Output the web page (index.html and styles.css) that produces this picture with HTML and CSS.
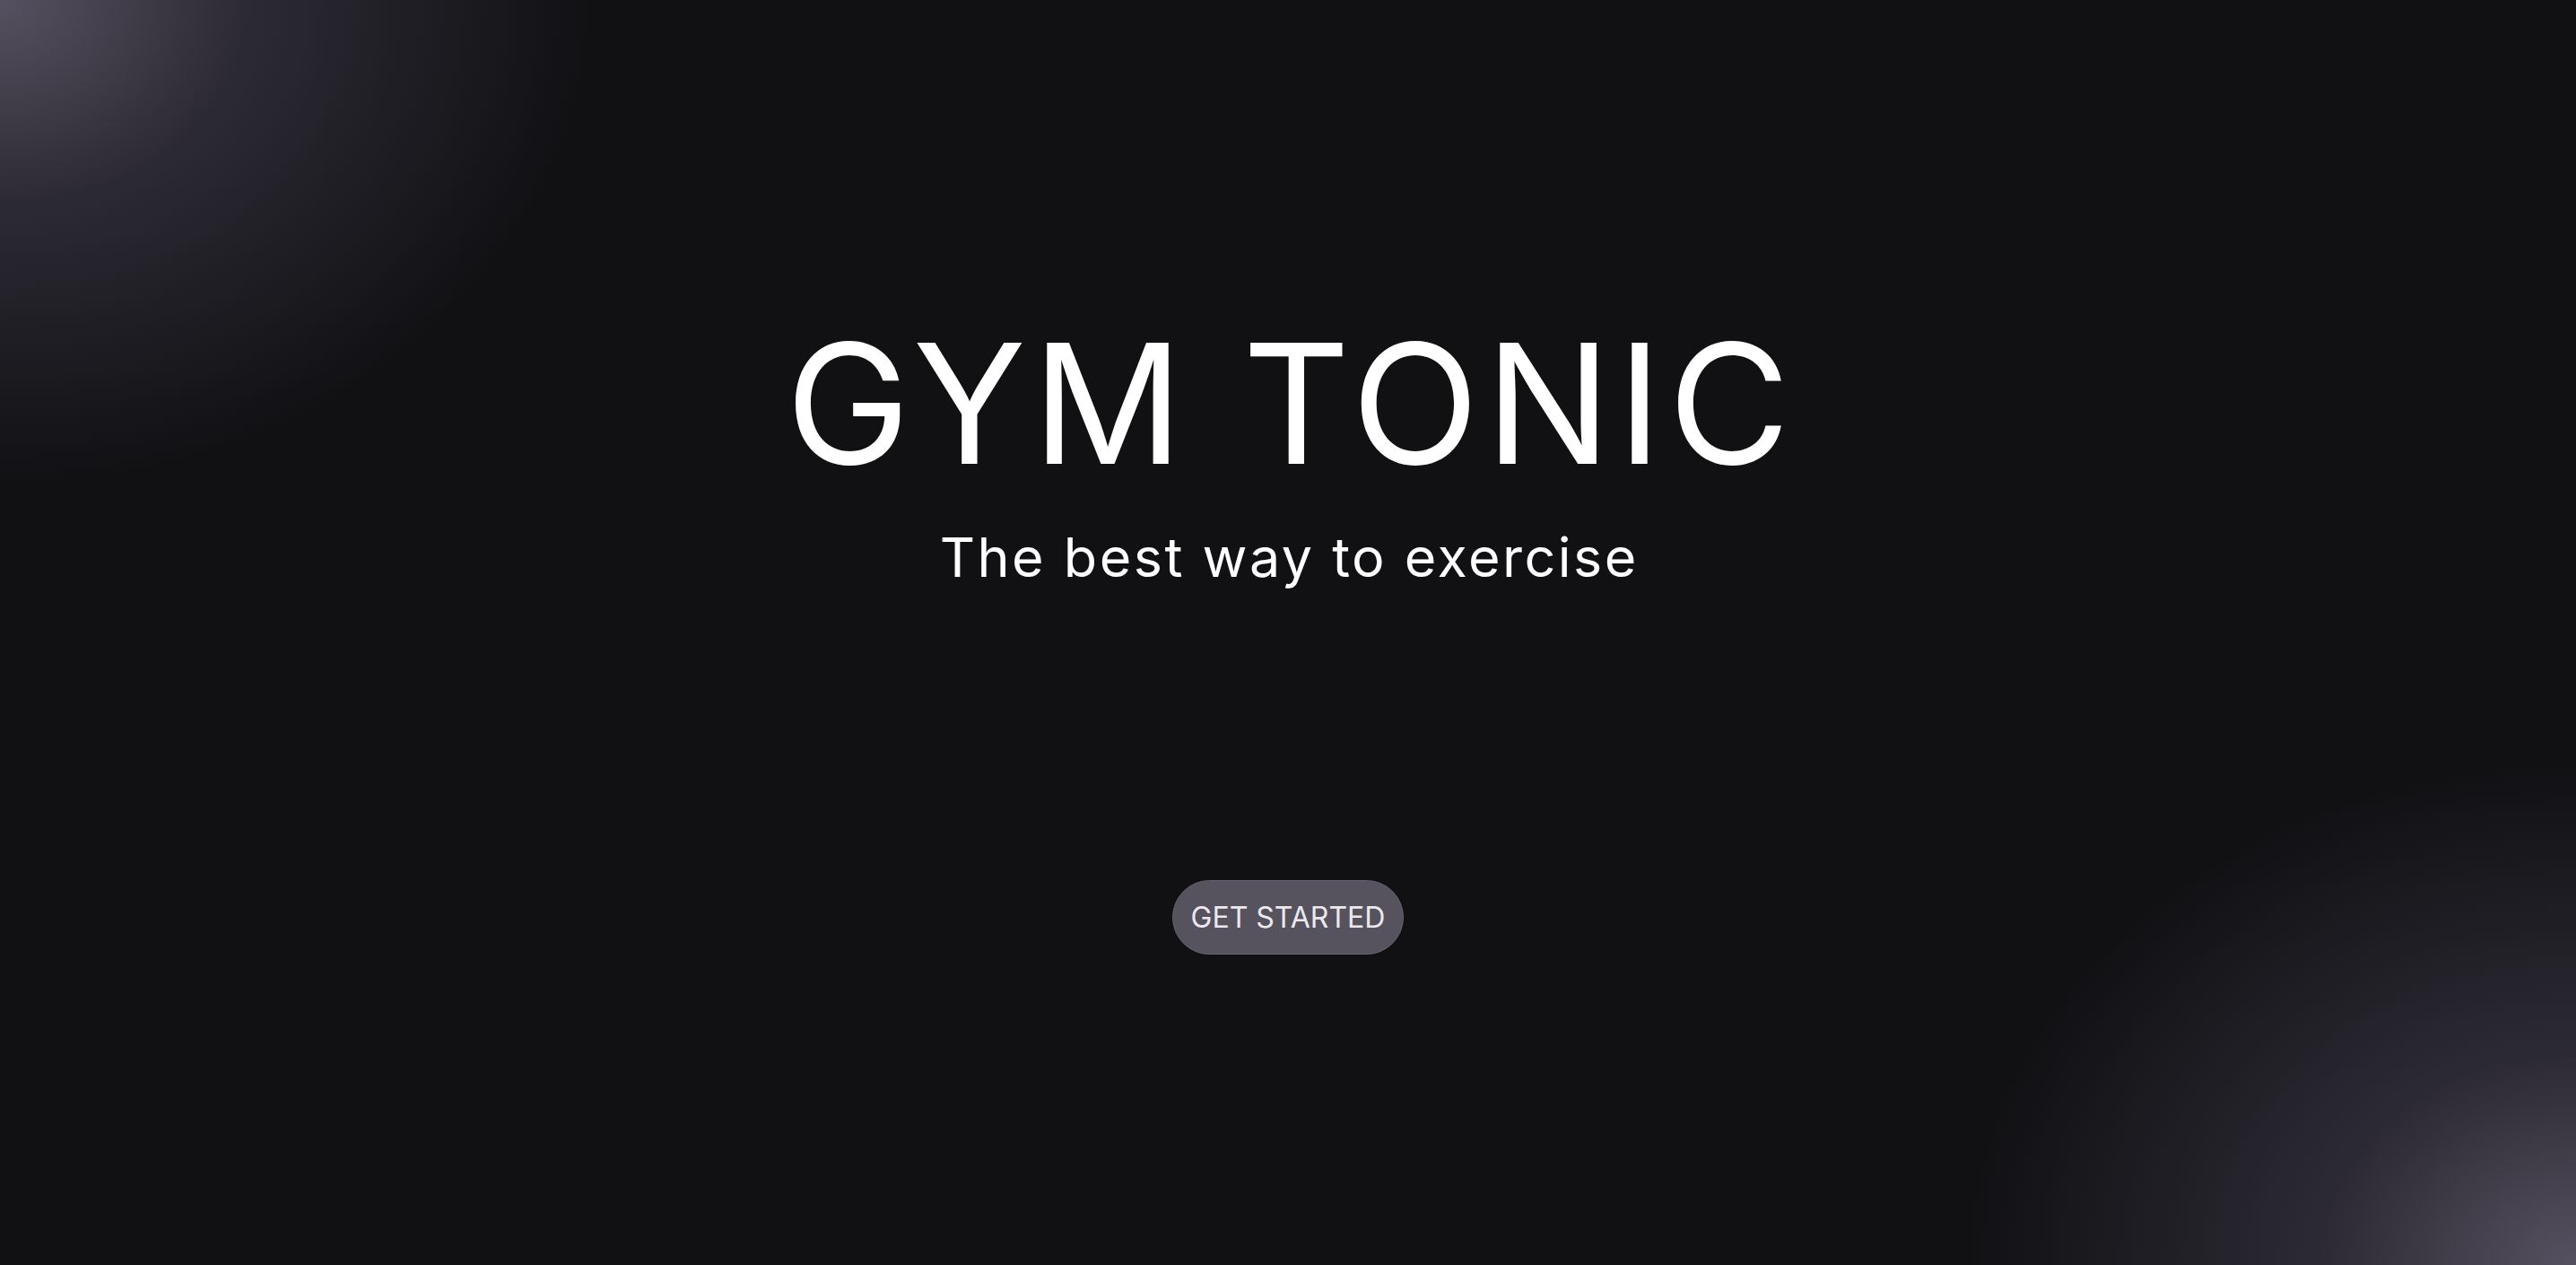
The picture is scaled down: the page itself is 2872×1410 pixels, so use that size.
FILE: index.html
```html
<!DOCTYPE html>
<html lang="en">
<head>
<meta charset="utf-8">
<title>Gym Tonic</title>
<link rel="stylesheet" href="styles.css">
</head>
<body>
<main class="hero">
  <h1 class="hero-title">GYM TONIC</h1>
  <p class="hero-tagline">The best way to exercise</p>
  <a class="hero-cta" href="#">GET STARTED</a>
</main>
</body>
</html>
```

FILE: styles.css
```css
html, body {
  margin: 0;
  padding: 0;
  height: 100%;
}

body {
  background-color: #111114;
  background-image:
    radial-gradient(ellipse 660px 540px at 0 0, rgba(86, 81, 96, 1) 0%, rgba(62, 58, 72, 0.6) 42%, rgba(17, 17, 20, 0) 100%),
    radial-gradient(ellipse 680px 560px at 100% 100%, rgba(86, 81, 96, 1) 0%, rgba(62, 58, 72, 0.6) 42%, rgba(17, 17, 20, 0) 100%);
  background-repeat: no-repeat;
  font-family: Inter, "Liberation Sans", sans-serif;
  color: #ffffff;
  overflow: hidden;
}

.hero {
  height: 100%;
  display: flex;
  flex-direction: column;
  align-items: center;
  padding-top: 357px;
  box-sizing: border-box;
}

.hero-title {
  margin: 0;
  padding-left: 7px;
  font-size: 186px;
  font-weight: 400;
  line-height: 1;
  letter-spacing: 7px;
}

.hero-tagline {
  margin: 48px 0 0;
  padding-left: 2.5px;
  font-size: 61px;
  font-weight: 400;
  line-height: 1;
  letter-spacing: 2.5px;
}

.hero-cta {
  margin-top: 329px;
  display: flex;
  align-items: center;
  justify-content: center;
  width: 258px;
  height: 83px;
  box-sizing: border-box;
  border-radius: 42px;
  background: #56525e;
  border: 1px solid #67636f;
  color: #ebe9ee;
  font-size: 32px;
  text-decoration: none;
}
```
